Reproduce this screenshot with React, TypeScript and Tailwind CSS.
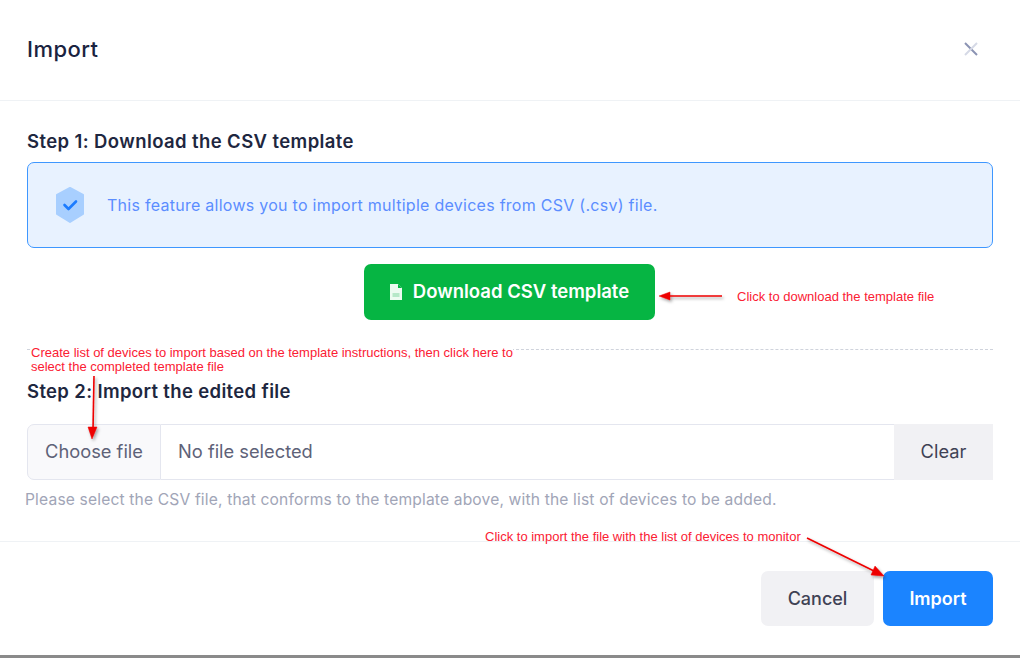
export default function App() {
  const note = "absolute font-['Liberation_Sans',Arial,sans-serif] text-[13px] leading-[14px] text-[#fb2033] whitespace-nowrap";
  return (
    <div className="relative w-[1020px] h-[658px] overflow-hidden bg-white font-['Inter',sans-serif] flex flex-col">
      <header className="h-[101px] shrink-0 border-b border-[#eff2f5] flex items-center justify-between pl-[27px] pr-[41px] pb-[2px]">
        <h1 className="text-[22px] font-medium text-[#1a2340] tracking-[0.45px]">Import</h1>
        <svg width="16" height="16" viewBox="0 0 16 16" className="mb-[1px]">
          <path d="M2 2 L14 14" stroke="#8b93b3" strokeWidth="2" />
          <path d="M14 2 L2 14" stroke="#d5d9e6" strokeWidth="2" />
        </svg>
      </header>

      <main className="h-[440px] shrink-0 px-[27px] flex flex-col">
        <h2 className="mt-[27px] h-[26px] leading-[26px] text-[18.5px] font-semibold text-[#1e2740] tracking-[0.4px]">Step 1: Download the CSV template</h2>
        <div className="mt-[8px] h-[86px] rounded-[7px] border-[1.5px] border-[#3e97ff] bg-[#e8f2ff] flex items-center pl-[27px] gap-[22px]">
          <svg width="30" height="36" viewBox="0 0 30 36">
            <path d="M15 1 L28 8 V27 L15 35 L2 27 V8 Z" fill="#a8cfff" stroke="#a8cfff" strokeWidth="2" strokeLinejoin="round" />
            <path d="M9.5 18 L13.5 22 L21 14.5" fill="none" stroke="#1b7bff" strokeWidth="2.6" strokeLinecap="round" strokeLinejoin="round" />
          </svg>
          <p className="text-[16px] text-[#5b8dff] tracking-[0.27px]">This feature allows you to import multiple devices from CSV (.csv) file.</p>
        </div>
        <div className="mt-[16px] flex justify-center pr-[2px]">
          <button className="w-[291px] h-[56px] rounded-[7px] bg-[#06b543] text-white flex items-center justify-center gap-[10px] text-[18.5px] font-semibold">
            <svg width="14" height="18" viewBox="0 0 14 18">
              <path d="M1 1 H9 L13 5 V17 H1 Z" fill="#ecfbf1" />
              <path d="M9 1 V5 H13" fill="#06b543" />
              <path d="M3.5 11 H10.5 M3.5 13 H10.5" stroke="#7fd6a0" strokeWidth="1.2" />
            </svg>
            Download CSV template
          </button>
        </div>
        <div className="mt-[29px] border-t border-dashed border-[#cfd3dc]" />
        <h2 className="mt-[28px] h-[26px] leading-[26px] text-[18.5px] font-semibold text-[#1e2740] tracking-[0.35px]">Step 2: Import the edited file</h2>
        <div className="mt-[20px] h-[56px] flex text-[18.3px] text-[#5e6278]">
          <div className="w-[134px] shrink-0 bg-[#f9f9fb] border border-[#e4e6ef] rounded-l-[7px] flex items-center justify-center pb-[1px]">Choose file</div>
          <div className="flex-1 border-y border-[#e4e6ef] flex items-center pl-[17px] pb-[1px]">No file selected</div>
          <div className="w-[99px] shrink-0 bg-[#f1f1f4] flex items-center justify-center text-[#3f4254] pb-[1px]">Clear</div>
        </div>
        <p className="mt-[10px] ml-[-2px] text-[15.6px] leading-[20px] text-[#a1a5b7] tracking-[0.16px]">Please select the CSV file, that conforms to the template above, with the list of devices to be added.</p>
      </main>

      <footer className="flex-1 border-t border-[#eff2f5] flex justify-end items-start gap-[9px] pt-[29px] pr-[27px] border-b-[3px] border-b-[#8a8a8a]">
        <button className="w-[113px] h-[55px] rounded-[7px] bg-[#f1f1f4] text-[#3f4254] text-[18px] font-medium">Cancel</button>
        <button className="w-[110px] h-[55px] rounded-[7px] bg-[#1b84ff] text-white text-[18px] font-semibold">Import</button>
      </footer>

      <div className={note + " left-[737px] top-[290px]"}>Click to download the template file</div>
      <div className={note + " left-[31px] top-[346px] bg-white"}>Create list of devices to import based on the template instructions, then click here to<br />select the completed template file</div>
      <div className={note + " left-[485px] top-[530px]"}>Click to import the file with the list of devices to monitor</div>

      <svg className="absolute left-0 top-0 pointer-events-none" width="1020" height="658" viewBox="0 0 1020 658">
        <defs>
          <filter id="s" x="-30%" y="-30%" width="160%" height="160%">
            <feDropShadow dx="1.5" dy="2" stdDeviation="1.5" floodColor="#000" floodOpacity="0.35" />
          </filter>
        </defs>
        <g filter="url(#s)" fill="#ee0000" stroke="#ee0000">
          <path d="M722 296 H664" strokeWidth="1.6" />
          <path d="M659 296 L670 292 V300 Z" strokeWidth="0.5" />
          <path d="M94 376 L93 430" strokeWidth="1.6" />
          <path d="M92 439 L88 427 H97 Z" strokeWidth="0.5" />
          <path d="M807 538 L876 572" strokeWidth="1.6" />
          <path d="M884 576 L871 575 L875 566 Z" strokeWidth="0.5" />
        </g>
      </svg>
    </div>
  );
}
